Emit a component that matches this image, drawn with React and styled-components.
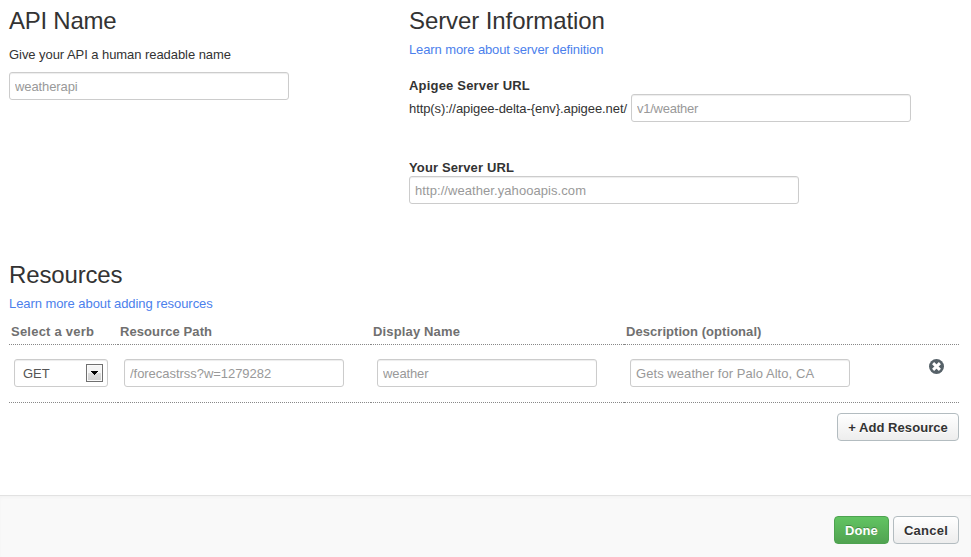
import React from "react";
import styled, { createGlobalStyle, css } from "styled-components";

const GlobalStyle = createGlobalStyle`
  * { box-sizing: border-box; }
  body {
    margin: 0;
    background: #fff;
    color: #333;
    font: 13px/18px "Liberation Sans", Arial, sans-serif;
  }
`;

const Page = styled.div`
  display: flex;
  flex-direction: column;
  height: 557px;
  overflow: hidden;
`;

const Content = styled.main`
  flex: 1;
  padding: 3px 12px 0 9px;
`;

const TopSections = styled.div`
  display: grid;
  grid-template-columns: 400px 1fr;
  height: 254px;
`;

const Section = styled.section`
  display: flex;
  flex-direction: column;
  align-items: flex-start;
`;

const Heading = styled.h2`
  margin: 0;
  font-size: 24px;
  font-weight: 400;
  line-height: 36px;
  white-space: nowrap;
  letter-spacing: ${(p) => p.$track || 0}px;
`;

const Help = styled.p`
  margin: 7px 0 8px;
  white-space: nowrap;
  letter-spacing: ${(p) => p.$track || 0}px;
`;

const Link = styled.a`
  margin-top: 2px;
  color: #4c7fec;
  text-decoration: none;
  white-space: nowrap;
  letter-spacing: ${(p) => p.$track || 0}px;
`;

const Label = styled.label`
  height: 17px;
  font-weight: 700;
  white-space: nowrap;
  margin-top: ${(p) => p.$gap}px;
  letter-spacing: ${(p) => p.$track || 0}px;
`;

const fieldBox = css`
  height: 28px;
  border: 1px solid #ccc;
  border-radius: 3px;
  background: #fff;
  box-shadow: inset 0 1px 1px rgba(0, 0, 0, 0.075);
`;

const Field = styled.input`
  ${fieldBox}
  display: block;
  width: ${(p) => p.$width}px;
  padding: 4px 5px;
  font: inherit;
  outline: none;
  letter-spacing: ${(p) => p.$track || 0}px;
  &::placeholder {
    color: #999;
    opacity: 1;
  }
`;

const UrlRow = styled.div`
  display: flex;
  align-items: center;
`;

const UrlPrefix = styled.span`
  width: 222px;
  padding-top: 2px;
  white-space: nowrap;
  letter-spacing: ${(p) => p.$track || 0}px;
`;

const TableRow = styled.div`
  display: grid;
  grid-template-columns: 109px 253px 253px 254px 81px;
`;

const HeadCell = styled.div`
  height: 32px;
  padding: 10px 2px 0;
  border-bottom: 1px dotted #888;
  color: #707070;
  font-weight: 700;
  white-space: nowrap;
  letter-spacing: ${(p) => p.$track || 0}px;
`;

const Cell = styled.div`
  height: 58px;
  padding: 14px 5px 0 ${(p) => p.$inset || 6}px;
  border-bottom: 1px dotted #888;
`;

const RemoveCell = styled(Cell)`
  padding: 14px 15px 0 0;
  text-align: right;
`;

const Select = styled.div`
  ${fieldBox}
  display: flex;
  align-items: center;
  justify-content: space-between;
  width: 94px;
  padding: 0 4px 0 8px;
  color: #555;
`;

const SelectValue = styled.span`
  padding-top: 2px;
`;

const SelectArrow = styled.span`
  display: flex;
  align-items: center;
  justify-content: center;
  width: 17px;
  height: 18px;
  border: 1px solid #707070;
  background: linear-gradient(#f4f4f4 48%, #dcdcdc 52%, #d0d0d0);
  box-shadow: inset 0 0 0 1px #fafafa;
  svg { display: block; }
`;

const RemoveButton = styled.button`
  width: 15px;
  height: 15px;
  padding: 0;
  border: 0;
  background: none;
  svg { display: block; }
`;

const Actions = styled.div`
  display: flex;
  justify-content: flex-end;
  margin-top: 10px;
`;

const Button = styled.button`
  width: ${(p) => p.$width}px;
  height: 28px;
  padding: 2px 0 0;
  border: 1px solid ${(p) => (p.$primary ? "#4da350" : "#b3bcc0")};
  border-radius: 4px;
  background: ${(p) =>
    p.$primary ? "linear-gradient(#62c462, #51a351)" : "linear-gradient(#fff, #ededed)"};
  color: ${(p) => (p.$primary ? "#fff" : "#333")};
  text-shadow: ${(p) => (p.$primary ? "0 -1px 0 rgba(0,0,0,.25)" : "0 1px 0 #fff")};
  font: inherit;
  font-weight: 700;
  white-space: nowrap;
  letter-spacing: ${(p) => p.$track || 0}px;
`;

const Footer = styled.footer`
  display: flex;
  justify-content: flex-end;
  gap: 4px;
  height: 62px;
  padding: 20px 12px 0;
  border-top: 1px solid #e2e2e2;
  background: #f9f9f9;
  box-shadow: inset 0 2px 3px rgba(0, 0, 0, 0.025);
`;

const ArrowIcon = () => (
  <svg width="7" height="4" viewBox="0 0 7 4" shapeRendering="crispEdges">
    <path d="M0 0h7v1h-1v1h-1v1h-1v1h-1v-1h-1v-1h-1v-1h-1z" fill="#000" />
  </svg>
);

const RemoveIcon = () => (
  <svg width="15" height="15" viewBox="0 0 15 15">
    <circle cx="7.5" cy="7.5" r="7.5" fill="#566168" />
    <path d="M4.1 4.1l6.8 6.8M10.9 4.1l-6.8 6.8" stroke="#fff" strokeWidth="2.9" />
  </svg>
);

export default function App() {
  return (
    <>
      <GlobalStyle />
      <Page>
        <Content>
          <TopSections>
            <Section>
              <Heading $track={-0.25}>API Name</Heading>
              <Help $track={-0.06}>Give your API a human readable name</Help>
              <Field $width={280} $track={-0.1} placeholder="weatherapi" />
            </Section>
            <Section>
              <Heading $track={-0.09}>Server Information</Heading>
              <Link $track={-0.11}>Learn more about server definition</Link>
              <Label $gap={18} $track={0.19}>Apigee Server URL</Label>
              <UrlRow>
                <UrlPrefix $track={-0.08}>{"http(s)://apigee-delta-{env}.apigee.net/"}</UrlPrefix>
                <Field $width={280} $track={-0.25} placeholder="v1/weather" />
              </UrlRow>
              <Label $gap={37} $track={0.13}>Your Server URL</Label>
              <Field $width={390} $track={0.07} placeholder="http://weather.yahooapis.com" />
            </Section>
          </TopSections>
          <Section>
            <Heading $track={-0.15}>Resources</Heading>
            <Link $track={-0.07}>Learn more about adding resources</Link>
          </Section>
          <TableRow>
            <HeadCell $track={0.23}>Select a verb</HeadCell>
            <HeadCell $track={0.08}>Resource Path</HeadCell>
            <HeadCell $track={0.15}>Display Name</HeadCell>
            <HeadCell $track={0.05}>Description (optional)</HeadCell>
            <HeadCell />
          </TableRow>
          <TableRow>
            <Cell $inset={5}>
              <Select>
                <SelectValue>GET</SelectValue>
                <SelectArrow><ArrowIcon /></SelectArrow>
              </Select>
            </Cell>
            <Cell><Field $width={220} $track={-0.04} placeholder="/forecastrss?w=1279282" /></Cell>
            <Cell><Field $width={220} $track={-0.12} placeholder="weather" /></Cell>
            <Cell><Field $width={220} $track={0.06} placeholder="Gets weather for Palo Alto, CA" /></Cell>
            <RemoveCell>
              <RemoveButton aria-label="Remove resource"><RemoveIcon /></RemoveButton>
            </RemoveCell>
          </TableRow>
          <Actions>
            <Button $width={122} $track={0.06}>+ Add Resource</Button>
          </Actions>
        </Content>
        <Footer>
          <Button $primary $width={55} $track={0.1}>Done</Button>
          <Button $width={66} $track={0.25}>Cancel</Button>
        </Footer>
      </Page>
    </>
  );
}
